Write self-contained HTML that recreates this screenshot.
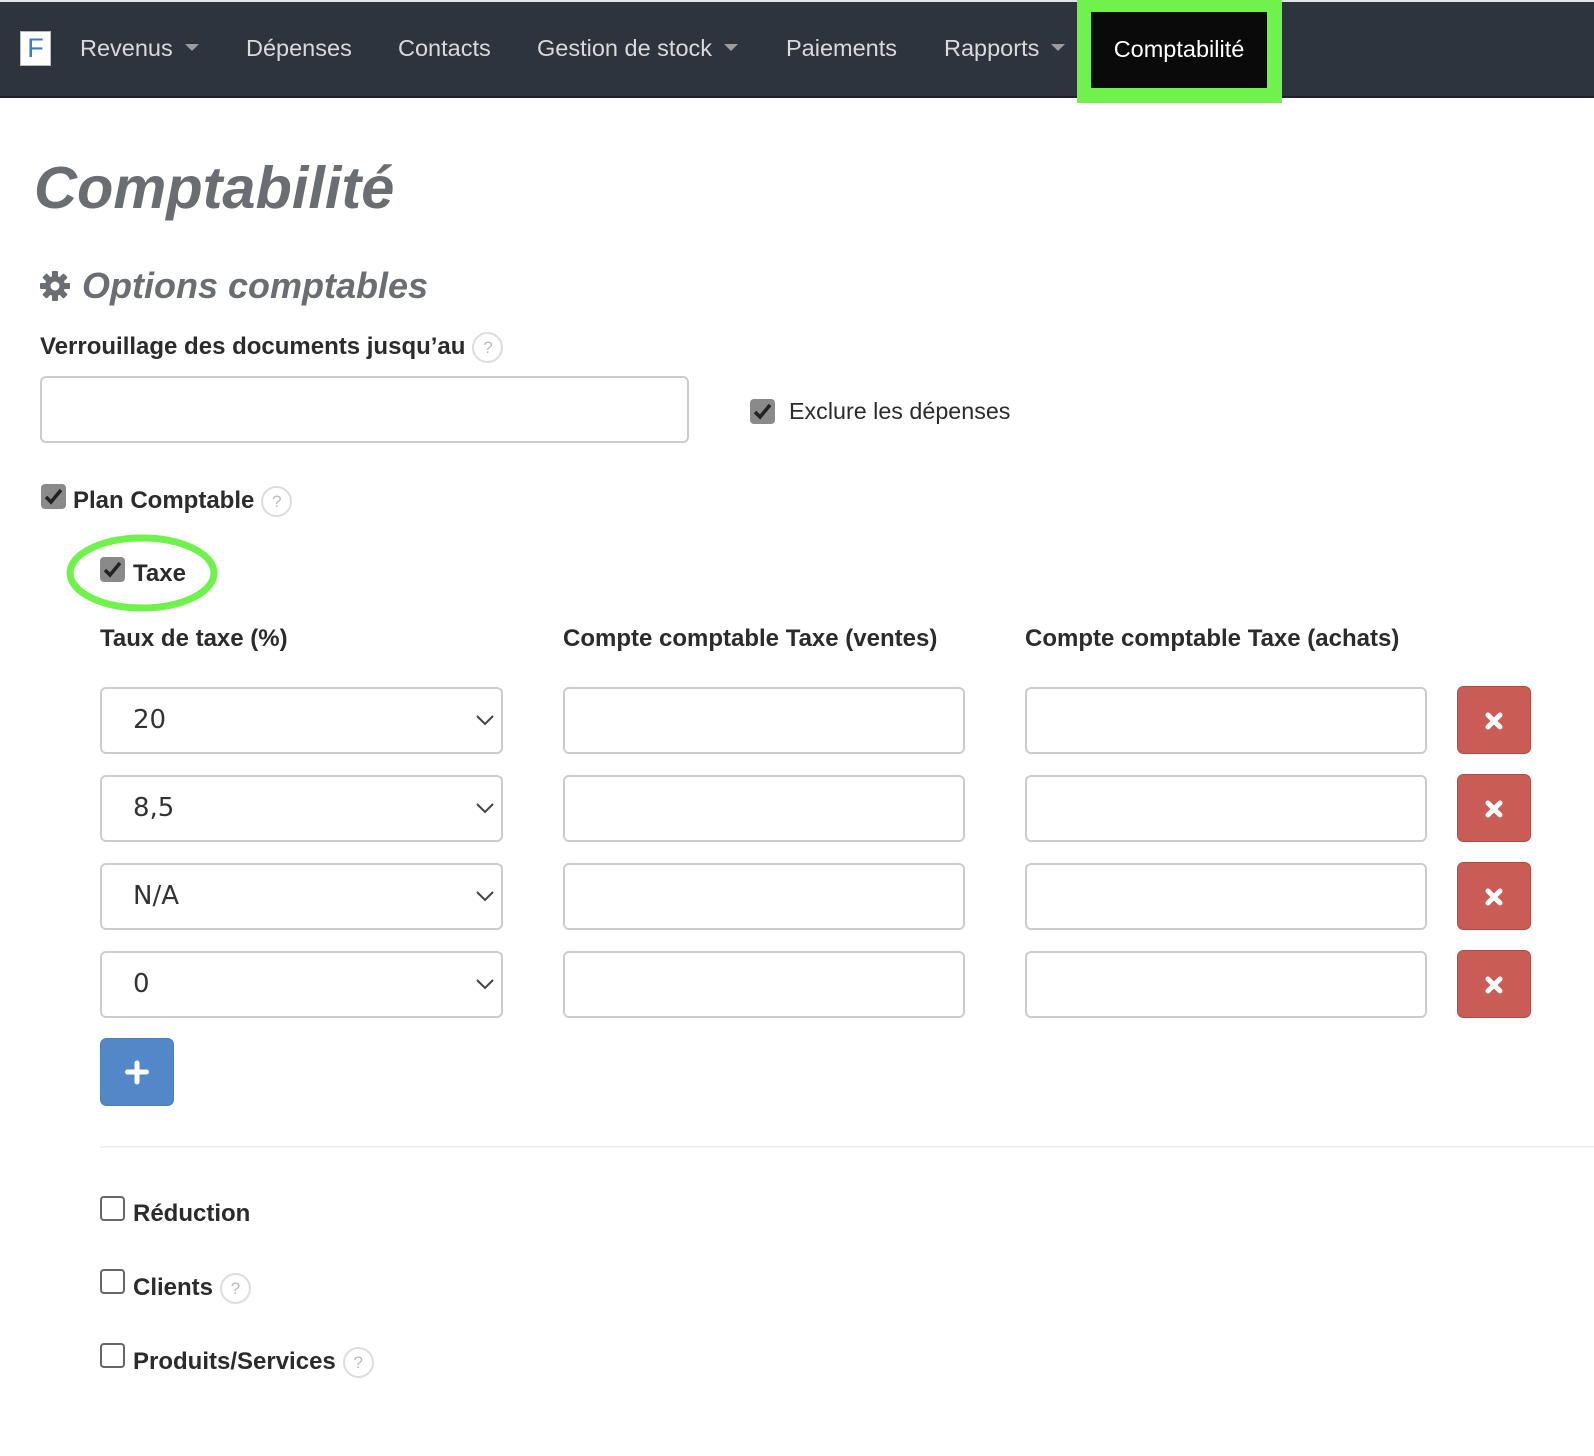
<!DOCTYPE html>
<html><head><meta charset="utf-8"><style>
*{box-sizing:border-box;margin:0;padding:0}
body{width:1594px;height:1456px;background:#fff;position:relative;overflow:hidden;font-family:"Liberation Sans",Arial,sans-serif;color:#2b2b2b}
.a{position:absolute}
.nav{left:0;top:2px;width:1594px;height:96px;background:#2e343e;border-bottom:2px solid #1e2228}
.ni{position:absolute;top:33px;font-size:23.5px;color:#d9dadc;white-space:nowrap}
.car{display:inline-block;width:0;height:0;border-left:7px solid transparent;border-right:7px solid transparent;border-top:7px solid #9a9ca0;margin-left:12px;vertical-align:middle;position:relative;top:-2px}
.lbl{font-weight:bold;font-size:24px;color:#2b2b2b;white-space:nowrap}
.q{display:inline-block;width:31px;height:31px;border:2px solid #ddd;border-radius:50%;color:#bbb;font-size:17px;font-weight:normal;text-align:center;line-height:27px;vertical-align:middle;margin-left:7px}
.inp{border:2px solid #ccc;border-radius:6px;background:#fff}
.cb{width:25px;height:25px;border-radius:4px;background:#8a8a8a}
.cbe{width:25px;height:25px;border-radius:4px;border:2px solid #666;background:#fff}
.sel{font-size:28px;color:#333;padding-left:31px;line-height:62px;font-family:"DejaVu Sans",sans-serif;font-size:26px}
</style></head><body>
<div class="a" style="left:0;top:0;width:1594px;height:2px;background:#e2e3e5"></div>
<div class="a nav">
  <div class="a" style="left:20px;top:29px;width:31px;height:35px;background:#fff;border:1px solid #bbb;color:#3a78c9;font-size:27px;text-align:center;line-height:33px">F</div>
  <div class="ni" style="left:80px">Revenus<span class="car"></span></div>
  <div class="ni" style="left:246px">Dépenses</div>
  <div class="ni" style="left:398px">Contacts</div>
  <div class="ni" style="left:537px">Gestion de stock<span class="car"></span></div>
  <div class="ni" style="left:786px">Paiements</div>
  <div class="ni" style="left:944px">Rapports<span class="car"></span></div>
</div>
<div class="a" style="left:1077px;top:0;width:205px;height:103px;background:#6ff24b"></div>
<div class="a" style="left:1091px;top:12px;width:176px;height:76px;background:#0a0a0a;color:#fff;font-size:23.5px;text-align:center;line-height:74px">Comptabilité</div>

<div class="a" style="left:34px;top:153px;font-size:59.5px;font-weight:bold;font-style:italic;color:#6a6d72">Comptabilité</div>
<svg class="a" style="left:39px;top:270px" width="32" height="32" viewBox="0 0 32 32"><g fill="#6a6d72"><circle cx="16" cy="16" r="10"/><g id="t"><rect x="13" y="1" width="6" height="8" rx="1"/><rect x="13" y="23" width="6" height="8" rx="1"/></g><use href="#t" transform="rotate(45 16 16)"/><use href="#t" transform="rotate(90 16 16)"/><use href="#t" transform="rotate(135 16 16)"/></g><circle cx="16" cy="16" r="4.5" fill="#fff"/></svg>
<div class="a" style="left:82px;top:265px;font-size:36px;font-weight:bold;font-style:italic;color:#6a6d72">Options comptables</div>

<div class="a lbl" style="left:40px;top:332px">Verrouillage des documents jusqu’au<span class="q">?</span></div>
<div class="a inp" style="left:40px;top:376px;width:649px;height:67px"></div>
<div class="a cb" style="left:750px;top:399px"></div>
<svg class="a" style="left:750px;top:399px" width="25" height="25"><path d="M5 13l5 5L20 6" stroke="#222" stroke-width="3.5" fill="none"/></svg>
<div class="a" style="left:789px;top:398px;font-size:23.3px;color:#2b2b2b">Exclure les dépenses</div>

<div class="a cb" style="left:41px;top:484px"></div>
<svg class="a" style="left:41px;top:484px" width="25" height="25"><path d="M5 13l5 5L20 6" stroke="#222" stroke-width="3.5" fill="none"/></svg>
<div class="a lbl" style="left:73px;top:486px">Plan Comptable<span class="q">?</span></div>

<svg class="a" style="left:64px;top:533px" width="156" height="80"><ellipse cx="78" cy="40" rx="72" ry="35" fill="none" stroke="#6ff24b" stroke-width="7"/></svg>
<div class="a cb" style="left:100px;top:557px"></div>
<svg class="a" style="left:100px;top:557px" width="25" height="25"><path d="M5 13l5 5L20 6" stroke="#222" stroke-width="3.5" fill="none"/></svg>
<div class="a lbl" style="left:133px;top:560px">Taxe</div>

<div class="a lbl" style="left:100px;top:625px">Taux de taxe (%)</div>
<div class="a lbl" style="left:563px;top:625px">Compte comptable Taxe (ventes)</div>
<div class="a lbl" style="left:1025px;top:625px">Compte comptable Taxe (achats)</div>

<div class="a inp sel" style="left:100px;top:687px;width:403px;height:67px">20</div>
<div class="a inp sel" style="left:100px;top:775px;width:403px;height:67px">8,5</div>
<div class="a inp sel" style="left:100px;top:863px;width:403px;height:67px">N/A</div>
<div class="a inp sel" style="left:100px;top:951px;width:403px;height:67px">0</div>
<svg class="a" style="left:0;top:0" width="1594" height="1100">
<g stroke="#444" stroke-width="2" fill="none"><path d="M477 716l8 8 8-8"/><path d="M477 804l8 8 8-8"/><path d="M477 892l8 8 8-8"/><path d="M477 980l8 8 8-8"/></g>
</svg>
<div class="a inp" style="left:563px;top:687px;width:402px;height:67px"></div>
<div class="a inp" style="left:563px;top:775px;width:402px;height:67px"></div>
<div class="a inp" style="left:563px;top:863px;width:402px;height:67px"></div>
<div class="a inp" style="left:563px;top:951px;width:402px;height:67px"></div>
<div class="a inp" style="left:1025px;top:687px;width:402px;height:67px"></div>
<div class="a inp" style="left:1025px;top:775px;width:402px;height:67px"></div>
<div class="a inp" style="left:1025px;top:863px;width:402px;height:67px"></div>
<div class="a inp" style="left:1025px;top:951px;width:402px;height:67px"></div>
<svg class="a" style="left:0;top:0" width="1594" height="1120"><defs><path id="x" d="M-6 -6L6 6M6 -6L-6 6" stroke="#fff" stroke-width="5" stroke-linecap="round"/></defs>
<g fill="#c95c54" stroke="#b54a43"><rect x="1457.5" y="686.5" width="73" height="67" rx="6"/><rect x="1457.5" y="774.5" width="73" height="67" rx="6"/><rect x="1457.5" y="862.5" width="73" height="67" rx="6"/><rect x="1457.5" y="950.5" width="73" height="67" rx="6"/></g>
<use href="#x" x="1494" y="721"/><use href="#x" x="1494" y="809"/><use href="#x" x="1494" y="897"/><use href="#x" x="1494" y="985"/>
<rect x="100.5" y="1038.5" width="73" height="67" rx="6" fill="#5287c8" stroke="#4a7cbc"/>
<path d="M137 1063v19M127.5 1072h19" stroke="#fff" stroke-width="5" stroke-linecap="round"/>
</svg>
<div class="a" style="left:100px;top:1146px;width:1494px;height:2px;background:#eee"></div>

<div class="a cbe" style="left:100px;top:1196px"></div>
<div class="a lbl" style="left:133px;top:1200px">Réduction</div>
<div class="a cbe" style="left:100px;top:1269px"></div>
<div class="a lbl" style="left:133px;top:1273px">Clients<span class="q">?</span></div>
<div class="a cbe" style="left:100px;top:1343px"></div>
<div class="a lbl" style="left:133px;top:1347px">Produits/Services<span class="q">?</span></div>
</body></html>
